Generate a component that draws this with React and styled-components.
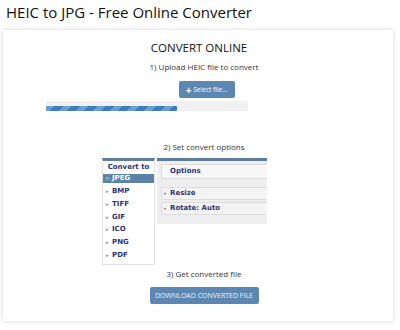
import React from "react";
import styled, { createGlobalStyle } from "styled-components";

const Global = createGlobalStyle`
  body {
    margin: 0;
    background: #ffffff;
    font-family: "Open Sans", "Liberation Sans", sans-serif;
  }
`;

const formats = ["JPEG", "BMP", "TIFF", "GIF", "ICO", "PNG", "PDF"];

function App() {
  return (
    <Page>
      <Global />
      <Title>HEIC to JPG - Free Online Converter</Title>
      <Card>
        <Heading>CONVERT ONLINE</Heading>
        <Step $top={4}>1) Upload HEIC file to convert</Step>
        <SelectButton>
          <Plus>+</Plus> Select file...
        </SelectButton>
        <ProgressTrack>
          <ProgressBar style={{ width: "65%" }} />
        </ProgressTrack>
        <Step $top={29}>2) Set convert options</Step>
        <Options>
          <FormatBox>
            <FormatHead>Convert to</FormatHead>
            {formats.map((f, i) => (
              <FormatItem key={f} $active={i === 0}>
                <Arrow $active={i === 0}>{i === 0 ? "▷" : "▸"}</Arrow>
                {f}
              </FormatItem>
            ))}
          </FormatBox>
          <SettingsBox>
            <OptionsHead>Options</OptionsHead>
            <SettingRow $top={8}>
              <Arrow>▸</Arrow>Resize
            </SettingRow>
            <SettingRow $top={2}>
              <Arrow>▸</Arrow>Rotate: Auto
            </SettingRow>
          </SettingsBox>
        </Options>
        <Step $top={2}>3) Get converted file</Step>
        <DownloadButton>DOWNLOAD CONVERTED FILE</DownloadButton>
      </Card>
    </Page>
  );
}

export default App;

const Page = styled.div`
  width: 400px;
  height: 330px;
  overflow: hidden;
`;

const Title = styled.h1`
  margin: 0;
  padding: 2px 0 0 6px;
  height: 28px;
  font-size: 15px;
  font-weight: 400;
  line-height: 20px;
  color: #111;
`;

const Card = styled.div`
  margin-left: 3px;
  width: 390px;
  height: 291px;
  background: #fff;
  box-shadow: 0 0 5px rgba(0, 0, 0, 0.18);
  display: flex;
  flex-direction: column;
  align-items: center;
  padding-top: 10px;
  box-sizing: border-box;
`;

const Heading = styled.div`
  margin-left: 2px;
  font-size: 11.5px;
  line-height: 16px;
  color: #111;
`;

const Step = styled.div`
  margin-top: ${(p) => p.$top ?? 6}px;
  margin-left: 12px;
  font-size: 8px;
  line-height: 13px;
  color: #333;
`;

const SelectButton = styled.div`
  margin-top: 8px;
  margin-left: 17px;
  width: 56px;
  height: 17px;
  border-radius: 2px;
  background: #5b87b2;
  color: #fff;
  font-size: 6.5px;
  display: flex;
  align-items: center;
  justify-content: center;
  gap: 2px;
`;

const Plus = styled.span`
  font-size: 10px;
  font-weight: 700;
  line-height: 10px;
`;

const ProgressTrack = styled.div`
  margin-top: 3px;
  align-self: flex-start;
  margin-left: 43px;
  width: 202px;
  height: 10px;
  background: #f0f0f0;
  display: flex;
  align-items: flex-end;
`;

const ProgressBar = styled.div`
  height: 5px;
  border-radius: 1px;
  background: repeating-linear-gradient(
    -45deg,
    #3f7cba 0 6px,
    #6b9fd2 6px 12px
  );
`;

const Options = styled.div`
  margin-top: 5px;
  align-self: flex-start;
  margin-left: 99px;
  display: flex;
  gap: 2px;
  align-items: flex-start;
`;

const FormatBox = styled.div`
  width: 53px;
  height: 107px;
  box-sizing: border-box;
  border: 1px solid #e2e2e2;
  border-top: 3px solid #5e7d9d;
  background: #fff;
  font-family: "DejaVu Sans", sans-serif;
  font-weight: 700;
`;

const FormatHead = styled.div`
  height: 13px;
  font-size: 7px;
  line-height: 13px;
  text-align: center;
  color: #2c3370;
`;

const FormatItem = styled.div`
  height: ${(p) => (p.$active ? 9 : 12.8)}px;
  margin-bottom: ${(p) => (p.$active ? 2 : 0)}px;
  padding-left: 3px;
  font-size: 7px;
  line-height: ${(p) => (p.$active ? 9 : 12.8)}px;
  color: ${(p) => (p.$active ? "#fff" : "#2c3370")};
  background: ${(p) => (p.$active ? "#5c82a8" : "transparent")};
`;

const Arrow = styled.span`
  display: inline-block;
  width: 6px;
  font-size: 5px;
  font-weight: 400;
  color: ${(p) => (p.$active ? "#fff" : "#888")};
`;

const SettingsBox = styled.div`
  width: 110px;
  height: 66px;
  box-sizing: border-box;
  border-top: 3px solid #5e7d9d;
  background: #eeeeee;
  padding: 3px 0 0 4px;
  font-family: "DejaVu Sans", sans-serif;
  font-weight: 700;
  color: #2c3370;
`;

const OptionsHead = styled.div`
  height: 15px;
  box-sizing: border-box;
  border: 1px solid #dcdcdc;
  border-right: none;
  background: #f7f7f7;
  padding-left: 8px;
  font-size: 7px;
  line-height: 13px;
`;

const SettingRow = styled.div`
  margin-top: ${(p) => p.$top}px;
  height: 13px;
  box-sizing: border-box;
  border: 1px solid #dcdcdc;
  border-right: none;
  background: #f4f4f4;
  padding-left: 2px;
  font-size: 7px;
  line-height: 11px;
`;

const DownloadButton = styled.div`
  margin-top: 7px;
  margin-left: 12px;
  width: 109px;
  height: 17px;
  border-radius: 2px;
  background: #5b87b2;
  color: #eef3f8;
  font-size: 7px;
  line-height: 17px;
  text-align: center;
`;
